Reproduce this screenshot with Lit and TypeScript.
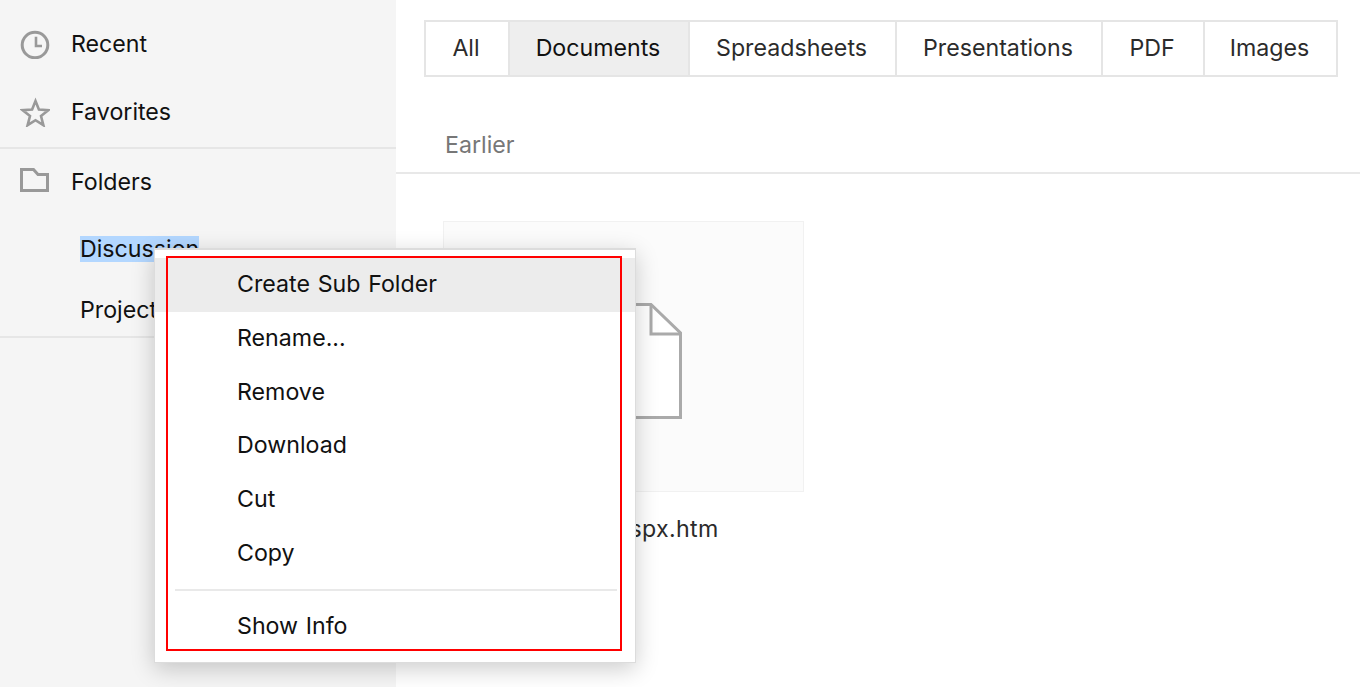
import { LitElement, html, css, svg } from "lit";
import { customElement } from "lit/decorators.js";

const clock = svg`<circle cx="15" cy="16" r="12.8" fill="none" stroke="#999" stroke-width="3"/><path d="M16 7.7V17H22" fill="none" stroke="#999" stroke-width="2.6"/>`;
const star = svg`<path d="M15.5 4l3.4 8.6 9.4.6-7.3 5.9 2.4 9.1-7.9-5-7.9 5 2.4-9.1-7.3-5.9 9.4-.6z" fill="none" stroke="#999" stroke-width="2.6" stroke-linejoin="miter"/>`;
const folder = svg`<path d="M1.5 2.5H13.5L18 7.5H27.5V23.5H1.5z" fill="none" stroke="#999" stroke-width="3"/>`;

@customElement("app-root")
export class AppRoot extends LitElement {
  static styles = css`
    :host {
      display: block;
      position: relative;
      width: 1360px;
      height: 687px;
      overflow: hidden;
      background: #fff;
      font-family: "Inter", "Liberation Sans", sans-serif;
      font-size: 23.2px;
      color: #111;
    }
    .page { display: flex; height: 100%; }
    .side { width: 396px; flex: none; background: #f5f5f5; padding-top: 10px; box-sizing: border-box; }
    .group { border-bottom: 2px solid #e6e6e6; }
    .top { padding-bottom: 1px; }
    .row { display: flex; align-items: center; height: 68px; padding-left: 20px; gap: 21px; }
    .row svg { width: 30px; height: 30px; flex: none; }
    .folders { height: 66px; }
    .subs { display: flex; flex-direction: column; padding: 3px 0 0 80px; }
    .sub { height: 60px; box-sizing: border-box; display: flex; align-items: center; padding-top: 2px; }
    .sub.last { height: 58px; padding-top: 5px; }
    .sel { background: #b3d7ff; line-height: 26px; }
    .main { flex: 1; min-width: 0; }
    .tabs {
      display: grid;
      grid-template-columns: 82px 180px 207px 206px 102px 133px;
      width: 914px;
      height: 57px;
      box-sizing: border-box;
      margin: 20px 0 0 28px;
      border: 2px solid #e5e5e5;
    }
    .tab { display: flex; align-items: center; justify-content: center; box-sizing: border-box; padding: 0 2px 2px 0; border-left: 2px solid #e5e5e5; color: #2b2b2b; }
    .tab:first-child { border-left: 0; }
    .tab.on { background: #eeeeee; color: #111; }
    .section {
      margin-top: 50px;
      height: 47px;
      box-sizing: border-box;
      padding: 1px 0 0 49px;
      border-bottom: 2px solid #e8e8e8;
      color: #777;
      line-height: 34px;
    }
    .file { margin: 47px 0 0 47px; width: 361px; }
    .thumb {
      height: 271px;
      box-sizing: border-box;
      background: #fbfbfb;
      border: 1px solid #f1f1f1;
      display: flex;
      align-items: center;
      justify-content: center;
      padding-top: 8px;
    }
    .thumb svg { width: 116px; height: 116px; }
    .name { text-align: center; margin-top: 22px; line-height: 30px; color: #2b2b2b; letter-spacing: 0.3px; }
    .menu {
      position: absolute;
      left: 154px;
      top: 248px;
      width: 482px;
      height: 415px;
      box-sizing: border-box;
      background: #fff;
      border: 2px solid #dcdcdc;
      border-width: 2px 1px 1px 1px;
      box-shadow: 0 6px 22px rgba(0, 0, 0, 0.2);
      padding-top: 8px;
    }
    .item { height: 53.7px; display: flex; align-items: center; padding: 0 0 1px 82px; box-sizing: border-box; color: #111; word-spacing: 1.2px; }
    .item.hover { background: #ececec; }
    .sep { height: 2px; margin: 9px 18px 9px 20px; background: #e9e9e9; }
    .outline {
      position: absolute;
      left: 166px;
      top: 256px;
      width: 456px;
      height: 395px;
      box-sizing: border-box;
      border: 2px solid #f00;
    }
  `;

  render() {
    return html`
      <div class="page">
        <aside class="side">
          <div class="group top">
            <div class="row"><svg viewBox="0 0 30 30">${clock}</svg><span>Recent</span></div>
            <div class="row"><svg viewBox="0 0 30 30">${star}</svg><span>Favorites</span></div>
          </div>
          <div class="group">
            <div class="row folders"><svg viewBox="0 0 30 30">${folder}</svg><span>Folders</span></div>
            <div class="subs">
              <div class="sub"><span class="sel">Discussion</span></div>
              <div class="sub last">Projects</div>
            </div>
          </div>
        </aside>
        <main class="main">
          <div class="tabs">
            <div class="tab">All</div>
            <div class="tab on">Documents</div>
            <div class="tab">Spreadsheets</div>
            <div class="tab">Presentations</div>
            <div class="tab">PDF</div>
            <div class="tab">Images</div>
          </div>
          <div class="section">Earlier</div>
          <div class="file">
            <div class="thumb">
              <svg viewBox="0 0 116 116">
                <path d="M1.5 1.5H85L114.5 30V114.5H1.5z" fill="#fff" stroke="#aaa" stroke-width="3"/>
                <path d="M85 1.5V31H114.5" fill="none" stroke="#aaa" stroke-width="3"/>
              </svg>
            </div>
            <div class="name">Default.aspx.htm</div>
          </div>
        </main>
      </div>
      <div class="menu">
        <div class="item hover">Create Sub Folder</div>
        <div class="item">Rename...</div>
        <div class="item">Remove</div>
        <div class="item">Download</div>
        <div class="item">Cut</div>
        <div class="item">Copy</div>
        <div class="sep"></div>
        <div class="item">Show Info</div>
      </div>
      <div class="outline"></div>
    `;
  }
}
